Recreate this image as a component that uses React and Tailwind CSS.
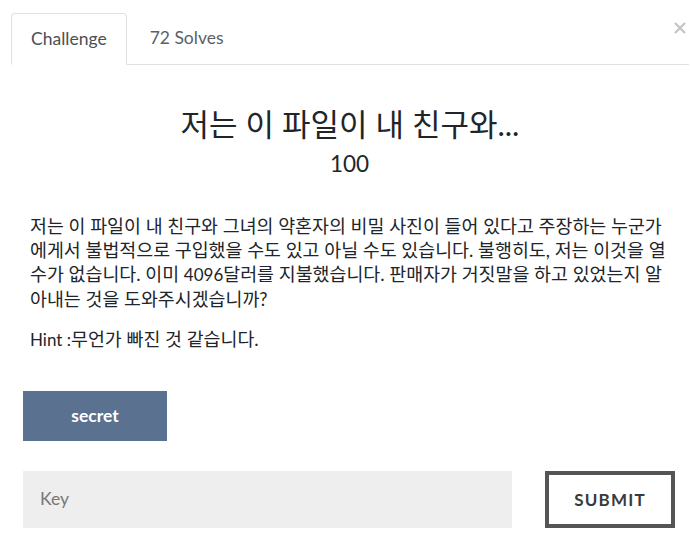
export default function App() {
  return (
    <div className="relative w-[691px] h-[547px] bg-white font-['Lato','Noto_Sans_CJK_KR',sans-serif] text-[#212529]">
      <svg className="absolute left-[674px] top-[22px]" width="12" height="12" viewBox="0 0 12 12">
        <path d="M1 1L11 11M11 1L1 11" stroke="#c4c4c4" strokeWidth="2.2" />
      </svg>
      <div className="pt-[13px] pl-[11px] pr-[2px]">
        <div className="flex border-b border-[#dee2e6]">
          <div className="-mb-px px-[19px] h-[52px] flex items-center border border-[#dee2e6] border-b-white rounded-t-[4px] bg-white text-[17.5px] text-[#495057]">
            Challenge
          </div>
          <div className="ml-[4px] px-[19px] h-[51px] flex items-center text-[17.5px] text-[#5a6169]">
            72 Solves
          </div>
        </div>
      </div>
      <div className="mt-[42px] pl-[9px] text-center text-[31px] leading-[34px] text-[#212529]">
        저는 이 파일이 내 친구와...
      </div>
      <div className="mt-[8px] pl-[8px] text-center text-[22.5px] leading-[30px] text-[#212529]">
        100
      </div>
      <div className="mt-[35px] pl-[30px] pr-[4px] text-[18.4px] leading-[24px] text-[#212529] whitespace-nowrap">
        <p>
          저는 이 파일이 내 친구와 그녀의 약혼자의 비밀 사진이 들어 있다고 주장하는 누군가
          <br />
          에게서 불법적으로 구입했을 수도 있고 아닐 수도 있습니다. 불행히도, 저는 이것을 열
          <br />
          수가 없습니다. 이미 <span className="text-[17px]">4096</span>달러를 지불했습니다. 판매자가 거짓말을 하고 있었는지 알
          <br />
          아내는 것을 도와주시겠습니까?
        </p>
        <p className="mt-[16px]">
          <span className="text-[17px]">Hint :</span>무언가 빠진 것 같습니다.
        </p>
      </div>
      <div className="mt-[39px] pl-[23px]">
        <button className="w-[144px] h-[50px] bg-[#5b7190] text-white font-bold text-[17.5px]">
          secret
        </button>
      </div>
      <div className="mt-[30px] pl-[23px] flex">
        <div className="w-[489px] h-[57px] bg-[#eeeeee] flex items-center pl-[17px] text-[17.5px] text-[#777]">
          Key
        </div>
        <button className="ml-[33px] w-[130px] h-[57px] border-4 border-[#555] bg-white text-[17px] font-bold tracking-[1.2px] text-[#3a3a3a]">
          SUBMIT
        </button>
      </div>
    </div>
  );
}
